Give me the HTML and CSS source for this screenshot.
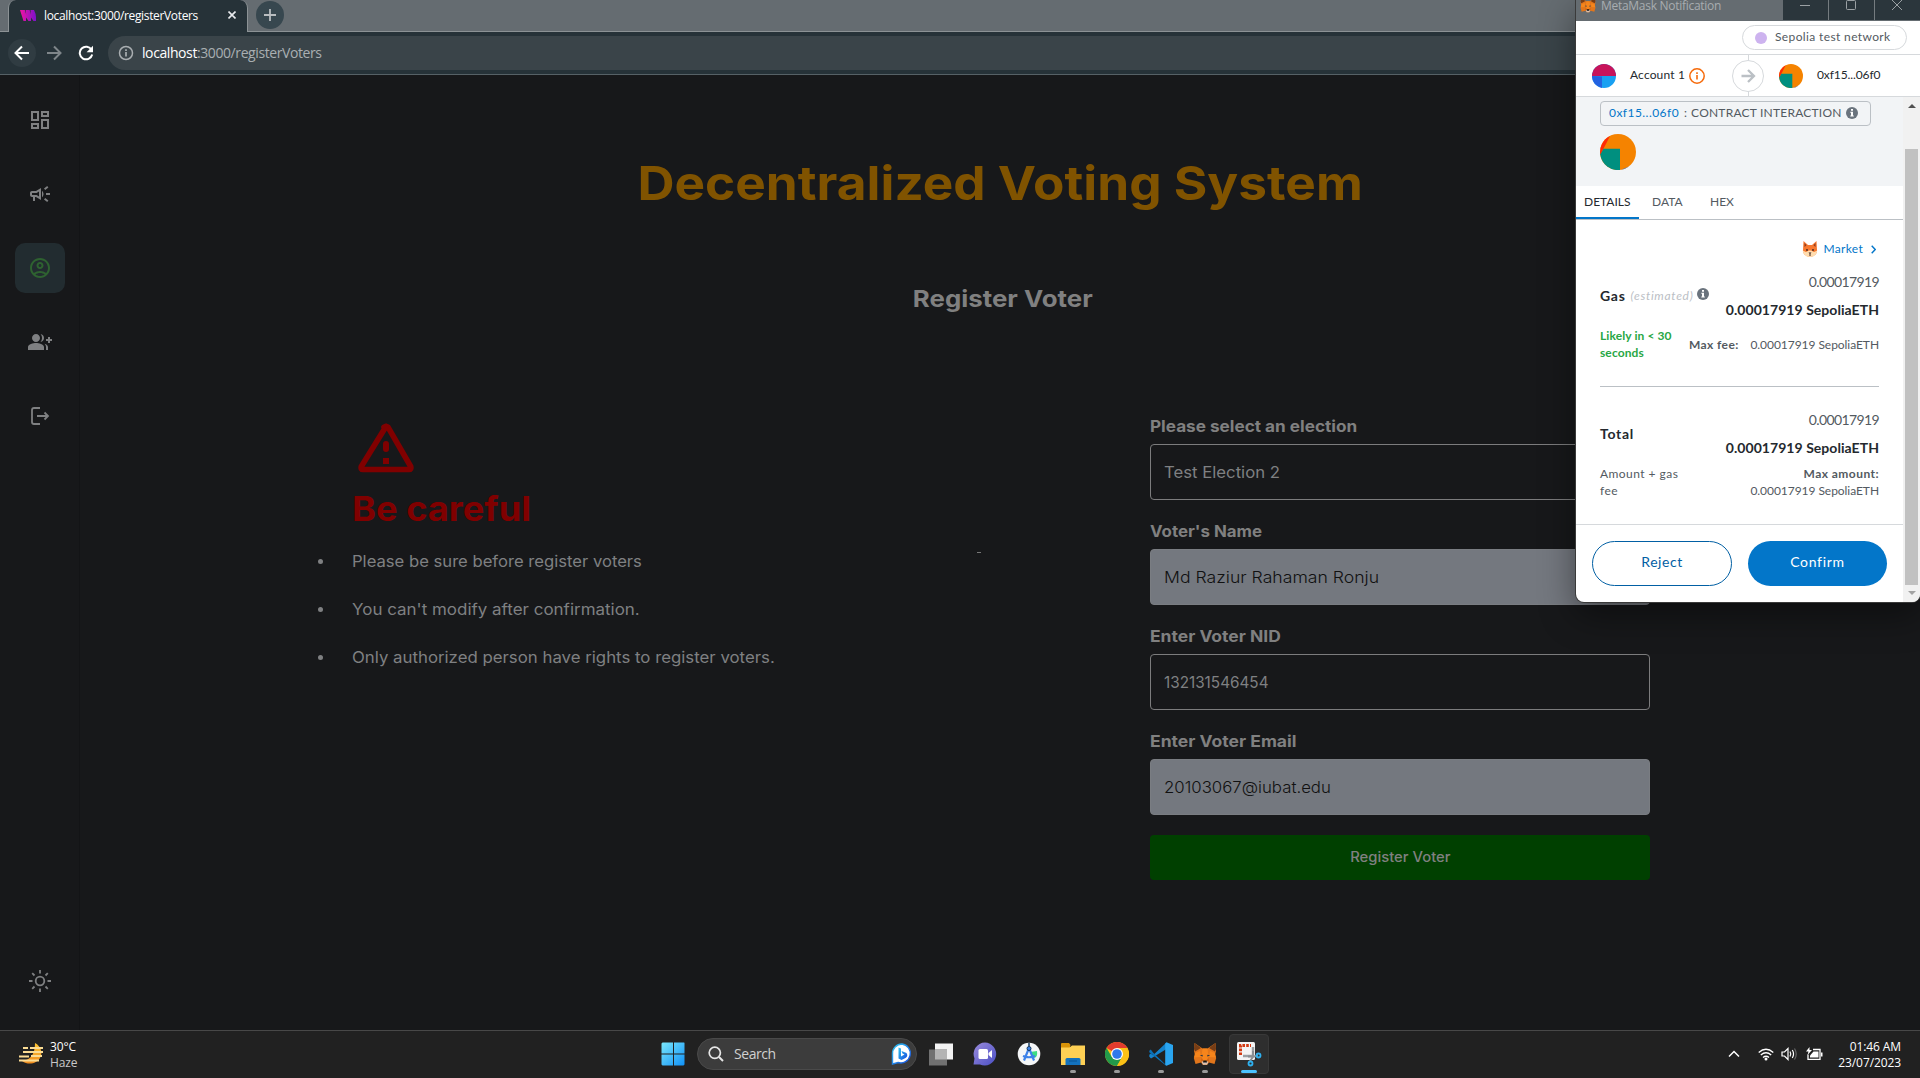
FILE: index.html
```html
<!DOCTYPE html>
<html lang="en">
<head>
<meta charset="utf-8">
<title>Decentralized Voting System</title>
<link rel="stylesheet" href="styles.css">
</head>
<body>
<svg class="defs" width="0" height="0" aria-hidden="true">
  <symbol id="fox" viewBox="0 0 24 24">
    <path fill="#e2761b" d="M1.500 1l8 5.500h5l8-5.500L23 9l-1 4 1.200 3-1.700 6-5.500-1.500-2 2.500h-4l-2-2.500L2.500 22 .8 16 2 13 1 9z"/>
    <path fill="#763d16" d="M1.500 1L8 6 5.500 7.500 2 9.500 1 7zM22.500 1L16 6l2.500 1.500L22 9.500 23 7z"/>
    <path fill="#f6851b" d="M9.500 6.500h5l1 8-2 4h-3l-2-4zM2 11l5-2 1 6-7 .5zM22 11l-5-2-1 6 7 .5z"/>
    <path fill="#cd6116" d="M8 20.500l.5-4.500 2 3zM16 20.500l-.5-4.500-2 3z"/>
    <path fill="#233447" d="M6.800 13.500l2.700-.8.4 1.800zM17.200 13.500l-2.700-.8-.4 1.800z"/>
    <path fill="#d7c1b3" d="M8.500 19.500h7L14 22.800h-4z"/>
    <path fill="#161616" d="M10.400 18.500h3.200l.4 2h-4z"/>
  </symbol>
  <symbol id="blockie" viewBox="0 0 36 36">
    <circle cx="18" cy="18" r="18" fill="#f58300"/>
    <path fill="#ff2a06" d="M10 2A18 18 0 0 0 .3 21z"/>
    <path fill="#008f7f" d="M3.500 14.800H20V36A18 18 0 0 1 .3 20.500z"/>
    <path fill="#3f77c9" d="M21 35.700l8-3.200a18 18 0 0 1-8 3.200z"/>
  </symbol>
  <symbol id="info" viewBox="0 0 12 12">
    <circle cx="6" cy="6" r="6" fill="#6a737d"/>
    <path fill="#fff" d="M5 2h2v1.700H5zM4.300 4.800H7v3.700h.8v1H4.300v-1H5V5.800h-.7z"/>
  </symbol>
</svg>

<header class="browser">
  <div class="tab-strip">
    <div class="tab">
      <svg class="favicon" width="16" height="11" viewBox="0 0 16 11"><defs><linearGradient id="fv"><stop offset="0" stop-color="#f213a4"/><stop offset="1" stop-color="#7c12c9"/></linearGradient></defs><path fill="url(#fv)" d="M0 0h4.800l1.400 4.500L5.600 0h4l1.400 4.500L10.500 0H14q2 4 2 7v4h-2.500L11 7.500V11H8.500L6 7.500V11H3.500z"/></svg>
      <span class="tab-title">localhost:3000/registerVoters</span>
      <svg class="tab-close" width="8" height="8" viewBox="0 0 8 8"><path d="M.5.5l7 7M7.500.5l-7 7" stroke="#e8eaed" stroke-width="1.600"/></svg>
    </div>
    <div class="new-tab"><svg width="12" height="12" viewBox="0 0 12 12"><path d="M6 0v12M0 6h12" stroke="#b9bdc0" stroke-width="1.800"/></svg></div>
  </div>
  <div class="toolbar">
    <span class="nav-btn nav-back"><svg width="16" height="16" viewBox="0 0 16 16"><path d="M15 8H2M8 1.500L1.500 8 8 14.500" fill="none" stroke="#fff" stroke-width="2"/></svg></span>
    <span class="nav-btn"><svg width="16" height="16" viewBox="0 0 16 16"><path d="M1 8h13M8 1.500L14.500 8 8 14.500" fill="none" stroke="#7f868a" stroke-width="2"/></svg></span>
    <span class="nav-btn"><svg width="16" height="16" viewBox="0 0 16 16"><path d="M13.600 5A6.300 6.300 0 1 0 14.200 9.500" fill="none" stroke="#fff" stroke-width="2"/><path d="M15 .8v6.400H8.600z" fill="#fff"/></svg></span>
    <div class="address">
      <svg width="16" height="16" viewBox="0 0 16 16"><circle cx="8" cy="8" r="6.500" fill="none" stroke="#a9aeb1" stroke-width="1.500"/><path d="M8 7v4.500M8 4.300v1.600" stroke="#a9aeb1" stroke-width="1.700"/></svg>
      <span class="url"><b>localhost</b>:3000/registerVoters</span>
    </div>
  </div>
</header>

<div class="page">
  <nav class="sidebar">
    <a class="side-item"><svg class="icon" viewBox="0 0 24 24"><path d="M19 5v2h-4V5h4M9 5v6H5V5h4m10 8v6h-4v-6h4M9 17v2H5v-2h4M21 3h-8v6h8V3zM11 3H3v10h8V3zm10 8h-8v10h8V11zm-10 4H3v6h8v-6z"/></svg></a>
    <a class="side-item"><svg class="icon" viewBox="0 0 24 24"><path d="M18 11v2h4v-2h-4zM16 17.610c.96.71 2.210 1.650 3.200 2.390.4-.53.8-1.070 1.200-1.600-.99-.74-2.240-1.680-3.200-2.400-.4.54-.8 1.080-1.200 1.610zM20.400 5.600c-.4-.53-.8-1.070-1.200-1.600-.99.74-2.240 1.680-3.200 2.400.4.53.8 1.070 1.200 1.600.96-.72 2.210-1.650 3.200-2.400zM4 9c-1.100 0-2 .9-2 2v2c0 1.100.9 2 2 2h1v4h2v-4h1l5 3V6L8 9H4zm5.030 1.710L11 9.530v4.940l-1.970-1.180-.48-.29H4v-2h4.550l.48-.29zM15.500 12c0-1.330-.58-2.530-1.500-3.350v6.690c.92-.81 1.500-2.010 1.500-3.340z"/></svg></a>
    <a class="side-item active"><svg class="icon" viewBox="0 0 24 24"><path d="M12 2C6.480 2 2 6.480 2 12s4.480 10 10 10 10-4.480 10-10S17.520 2 12 2zM7.350 18.500C8.660 17.560 10.260 17 12 17s3.340.56 4.650 1.500C15.340 19.440 13.740 20 12 20s-3.340-.56-4.650-1.500zm10.790-1.380C16.450 15.800 14.320 15 12 15s-4.450.8-6.140 2.120C4.700 15.730 4 13.950 4 12c0-4.420 3.580-8 8-8s8 3.580 8 8c0 1.950-.7 3.730-1.860 5.120zM12 6c-1.930 0-3.500 1.570-3.500 3.500S10.070 13 12 13s3.500-1.570 3.500-3.500S13.930 6 12 6zm0 5c-.83 0-1.500-.67-1.500-1.500S11.170 8 12 8s1.500.67 1.500 1.500S12.830 11 12 11z"/></svg></a>
    <a class="side-item"><svg class="icon" viewBox="0 0 24 24"><path d="M22 9V7h-2v2h-2v2h2v2h2v-2h2V9zM8 12c2.210 0 4-1.790 4-4s-1.790-4-4-4-4 1.790-4 4 1.790 4 4 4zm0 1c-2.670 0-8 1.340-8 4v3h16v-3c0-2.660-5.330-4-8-4zM12.510 4.050C13.430 5.110 14 6.490 14 8s-.57 2.890-1.490 3.950C14.470 11.700 16 10.040 16 8s-1.530-3.700-3.490-3.950zM16.530 13.830C17.420 14.660 18 15.700 18 17v3h2v-3c0-1.450-1.590-2.510-3.470-3.170z"/></svg></a>
    <a class="side-item"><svg class="icon stroked" viewBox="0 0 24 24"><path d="M12 4H6Q4 4 4 6v12q0 2 2 2h6M9 12h11M16.500 8.500L20 12l-3.500 3.500"/></svg></a>
    <a class="side-item theme"><svg class="icon stroked" viewBox="0 0 24 24"><circle cx="12" cy="12" r="4.300"/><path d="M12 1v3.500M12 19.500V23M1 12h3.500M19.500 12H23M4.200 4.200l2.300 2.300M17.500 17.500l2.300 2.300M4.200 19.800l2.300-2.300M17.500 6.500l2.300-2.300"/></svg></a>
  </nav>

  <main class="content">
    <h1 class="title"><span>Decentralized Voting System</span></h1>
    <h2 class="subtitle"><span>Register Voter</span></h2>
    <div class="columns">
      <section class="notice">
        <svg class="warn" width="56" height="50" viewBox="0 0 56 50"><path d="M28 3.500L3.300 43.500Q2.500 46.500 5 46.500H51Q53.500 46.500 52.700 43.500L30 4.200Q28 2.500 26 4.200z" fill="none" stroke="#800000" stroke-width="5.600" stroke-linejoin="round"/><path d="M28 21v5" stroke="#800000" stroke-width="6" stroke-linecap="round"/><path d="M25 35h6v6h-6z" fill="#800000"/></svg>
        <h3 class="notice-title"><span>Be careful</span></h3>
        <ul class="rules">
          <li class="rule-sure"><span>Please be sure before register voters</span></li>
          <li class="rule-modify"><span>You can't modify after confirmation.</span></li>
          <li class="rule-rights"><span>Only authorized person have rights to register voters.</span></li>
        </ul>
      </section>
      <form class="form">
        <label class="l-election">Please select an election</label>
        <div class="field f-election"><span>Test Election 2</span></div>
        <label class="l-name">Voter's Name</label>
        <div class="field filled f-name"><span>Md Raziur Rahaman Ronju</span></div>
        <label class="l-nid">Enter Voter NID</label>
        <div class="field f-nid"><span>132131546454</span></div>
        <label class="l-email">Enter Voter Email</label>
        <div class="field filled f-email"><span>20103067@iubat.edu</span></div>
        <div class="submit"><span>Register Voter</span></div>
      </form>
    </div>
    <i class="caret"></i>
  </main>
</div>

<footer class="taskbar">
  <div class="weather">
    <svg width="26" height="24" viewBox="0 0 26 24"><defs><linearGradient id="wx" x2="0" y2="1"><stop offset="0" stop-color="#ffc531"/><stop offset="1" stop-color="#f08c1e"/></linearGradient></defs><path d="M17 1c6 3 8 10 5 15s-11 8-18 3c8-1 13-6 13-18z" fill="url(#wx)"/><path d="M5 6h5M12 6h13M5 10h20M1 14.500h10M13 14h11M1 18.500h20" stroke="#fbdc94" stroke-width="2"/></svg>
    <div class="weather-text"><span>30°C</span><span class="dim">Haze</span></div>
  </div>
  <div class="dock">
    <div class="start"><svg width="24" height="24" viewBox="0 0 24 24"><defs><linearGradient id="wn" x2="1" y2="1"><stop offset="0" stop-color="#7ae7fb"/><stop offset="1" stop-color="#1091f7"/></linearGradient></defs><path fill="url(#wn)" d="M1.500.5H12v11H.5v-10zM13 .5h10q.5 0 .5.500v10.500H13zM.5 12.500H12v11H1.500l-1-1zM13 12.500h10.500v10l-1 1H13z"/></svg></div>
    <div class="search">
      <svg width="16" height="16" viewBox="0 0 16 16"><circle cx="6.800" cy="6.800" r="5.600" fill="none" stroke="#e6e6e6" stroke-width="1.700"/><path d="M11 11l4 4" stroke="#e6e6e6" stroke-width="1.900"/></svg>
      <span class="search-text">Search</span>
      <svg class="bing" width="22" height="22" viewBox="0 0 22 22"><defs><linearGradient id="bg" x2="1" y2="1"><stop offset="0" stop-color="#30c6f2"/><stop offset="1" stop-color="#1549dd"/></linearGradient></defs><path d="M11 1a9.500 9.500 0 1 1-4 18.500L1.500 21 1.500 11A9.500 9.500 0 0 1 11 1z" fill="#fff" stroke="url(#bg)" stroke-width="1.400"/><path d="M7.500 4.500l2.500 1v8l3.500-2-2-1-1-2.500 5 2q2 3-1 5l-4 2-3-1.500z" fill="url(#bg)"/></svg>
    </div>
    <div class="app"><svg width="24" height="24" viewBox="0 0 24 24"><path d="M6 1.500h18v16H6z" fill="#f3f3f3"/><path d="M0 7.500h18v16H0z" fill="#717171"/><path d="M6 7.500h12v10H6z" fill="#b4b4b4"/></svg></div>
    <div class="app"><svg width="24" height="24" viewBox="0 0 24 24"><defs><linearGradient id="ct" x2="1" y2="1"><stop offset="0" stop-color="#9a8bdc"/><stop offset="1" stop-color="#4a4fc4"/></linearGradient></defs><path d="M12 .5a11.500 11.500 0 1 1-5 22H.5l1-6A11.500 11.500 0 0 1 12 .5z" fill="url(#ct)"/><rect x="5.500" y="7" width="9.500" height="10" rx="1.500" fill="#fff"/><path d="M15.500 11l3.500-3v8l-3.500-3z" fill="#fff"/></svg></div>
    <div class="app"><svg width="24" height="24" viewBox="0 0 24 24"><circle cx="12" cy="12" r="11.300" fill="#f5f7f8"/><path d="M13 10l7-1q1 6-3 7z" fill="#3ddc84"/><path d="M12 6L7 18.500M12 6l5 12.500M6 14q6 2.500 12 0" fill="none" stroke="#3d83ea" stroke-width="2.200"/><circle cx="12" cy="6.500" r="2" fill="#3d83ea" stroke="#173a5e"/><path d="M12 1v3.500" stroke="#173a5e" stroke-width="1.500"/></svg></div>
    <div class="app running"><svg width="24" height="24" viewBox="0 0 24 24"><path d="M0 2q0-1 1-1h7l2 2.500h-1v4H0z" fill="#d89309"/><path d="M0 5.500h8.500l2.500-2H24V23H0z" fill="#fed054"/><path d="M4.500 23v-5.500q0-1.500 1.500-1.500h12q1.500 0 1.500 1.500V23z" fill="#1372bd"/><path d="M8 19h8" stroke="#0c5a9c" stroke-width="1.300"/></svg></div>
    <div class="app running"><svg width="24" height="24" viewBox="0 0 24 24"><circle cx="12" cy="12" r="12" fill="#fbc116"/><path d="M12 12L1.600 6A12 12 0 0 1 22.400 6z" fill="#e33b2e"/><path d="M12 12l-5.200 3L1.600 6A12 12 0 0 0 12 24l5.200-9z" fill="#229a4a"/><path d="M12 6h10.400A12 12 0 0 1 12 24l5.200-9z" fill="#fbc116"/><circle cx="12" cy="12" r="6" fill="#fff"/><circle cx="12" cy="12" r="4.800" fill="#3079ea"/></svg></div>
    <div class="app running"><svg width="24" height="24" viewBox="0 0 24 24"><path d="M17.500.5L4 13.200 1.800 11.500.3 12.800v2L2 16.500 17.500 7z" fill="#1583cc"/><path d="M17.500 23.500L4 10.500l-2.200-3L.3 8.800v1.500L17.500 24z" fill="#0a71b9"/><path d="M17.500.3L24 3v18l-6.500 2.800-1.300-1V1.500z" fill="#2aa5f0"/></svg></div>
    <div class="app running"><svg width="24" height="24"><use href="#fox"/></svg></div>
    <div class="app current"><svg width="26" height="26" viewBox="0 0 26 26"><rect x="1" y="1" width="18" height="18" rx="1.500" fill="#f4f4f4"/><path d="M4.500 14V4.500H15" fill="none" stroke="#d33a12" stroke-width="3" stroke-dasharray="2.600 1.200"/><path d="M7 15h10V6" fill="none" stroke="#9b9fa3" stroke-width="2.400"/><path d="M17 10v6l-3 4M12 15.500h6l4-1" fill="none" stroke="#8a8e92" stroke-width="2"/><circle cx="14.500" cy="22.500" r="2" fill="none" stroke="#2eb0ef" stroke-width="1.800"/><circle cx="22.500" cy="14.500" r="2" fill="none" stroke="#2eb0ef" stroke-width="1.800"/></svg></div>
  </div>
  <div class="tray">
    <svg width="12" height="8" viewBox="0 0 12 8"><path d="M1 6.500l5-5 5 5" fill="none" stroke="#fff" stroke-width="1.500"/></svg>
    <svg class="wifi" width="16" height="13" viewBox="0 0 16 13"><path d="M.7 4.500Q8-2 15.300 4.500M2.800 7Q8 2.500 13.200 7M5 9.500Q8 7 11 9.500" fill="none" stroke="#fff" stroke-width="1.300"/><circle cx="8" cy="11" r="1.500" fill="#fff"/></svg>
    <svg class="sound" width="17" height="14" viewBox="0 0 17 14"><path d="M1 5h2.500L7 1.500v11L3.500 9H1z" fill="none" stroke="#fff" stroke-width="1.200"/><path d="M9 4.500q1.500 2.500 0 5M11.300 3q2.500 4 0 8" fill="none" stroke="#fff" stroke-width="1.200"/><path d="M13.500 1.500q3.500 5.500 0 11" fill="none" stroke="#666" stroke-width="1.200"/></svg>
    <svg class="battery" width="17" height="14" viewBox="0 0 17 14"><path d="M7 2.500h7v9.800H2V7.500" fill="none" stroke="#fff" stroke-width="1.300"/><path d="M7.500 4.500H12.500v6H4V8.500z" fill="#fff"/><path d="M15 5.500h1.500v4H15zM3.500 0L0 4.500h2.500L1.500 8 6 3H3.500z" fill="#fff"/></svg>
    <div class="clock"><span>01:46 AM</span><span>23/07/2023</span></div>
  </div>
</footer>

<aside class="wallet">
  <div class="wallet-bar">
    <svg width="16" height="16"><use href="#fox"/></svg>
    <span class="wallet-name">MetaMask Notification</span>
    <div class="win-btn"><svg width="10" height="10" viewBox="0 0 10 10"><path d="M0 5.500h10"/></svg></div>
    <div class="win-btn"><svg width="10" height="10" viewBox="0 0 10 10"><rect x=".5" y=".5" width="9" height="9" rx="1"/></svg></div>
    <div class="win-btn"><svg width="10" height="10" viewBox="0 0 10 10"><path d="M0 0l10 10M10 0L0 10"/></svg></div>
  </div>
  <div class="network-row"><div class="network"><i class="dot"></i><span>Sepolia test network</span></div></div>
  <div class="parties">
    <div class="party from">
      <svg width="24" height="24" viewBox="0 0 24 24"><circle cx="12" cy="12" r="12" fill="#18a0f2"/><path d="M0 12a12 12 0 0 1 24 0z" fill="#c8145b"/><path d="M0 12l10 .5V24A12 12 0 0 1 0 12z" fill="#2362e1"/></svg>
      <span>Account 1</span>
      <svg class="alert" width="16" height="16" viewBox="0 0 16 16"><circle cx="8" cy="8" r="7.200" fill="none" stroke="#f66a0a" stroke-width="1.500"/><path d="M8 7v4.500M8 4.300v1.600" stroke="#f66a0a" stroke-width="1.600"/></svg>
    </div>
    <div class="arrow"><svg width="32" height="32" viewBox="0 0 32 32"><circle cx="16" cy="16" r="15.500" fill="#fff" stroke="#d6d9dc"/><path d="M9.500 16h12M16 10l6 6-6 6" fill="none" stroke="#bbc0c5" stroke-width="2.300"/></svg></div>
    <div class="party to"><svg width="24" height="24"><use href="#blockie"/></svg><span>0xf15...06f0</span></div>
  </div>
  <div class="wallet-body">
    <div class="scroll-area">
      <div class="summary">
        <div class="tag"><a>0xf15...06f0</a><span class="colon">:</span><span class="tag-kind">CONTRACT INTERACTION</span><svg width="12" height="12"><use href="#info"/></svg></div>
        <svg class="big-avatar" width="36" height="36"><use href="#blockie"/></svg>
      </div>
      <div class="tabs"><span class="tab-on">DETAILS</span><span class="tab-off">DATA</span><span class="tab-off">HEX</span></div>
      <div class="details">
        <div class="market"><svg width="16" height="16" viewBox="0 0 16 16"><path d="M1.500 0L6 4h4l4.500-4L15 9q0 6-7 7-7-1-7-7z" fill="#f7782f"/><path d="M.5 9.500L4 11l3-1.500h2L12 11l3.500-1.500Q14 16 8 16 2 16 .5 9.500z" fill="#ffdcae"/><path d="M2.500 2l2 2.200L2.500 6zM13.500 2l-2 2.200 2 1.800z" fill="#8d3a20"/><circle cx="5" cy="9" r=".9" fill="#3b2322"/><circle cx="11" cy="9" r=".9" fill="#3b2322"/><path d="M6.500 11.500h3L8 13.200zM7.500 13h1v2h-1z" fill="#3b2322"/></svg><span>Market</span><svg class="chev" width="5" height="9" viewBox="0 0 5 9"><path d="M.7.700l3.500 3.800L.7 8.300" fill="none" stroke="#0376c9" stroke-width="1.400"/></svg></div>
        <div class="row">
          <div class="row-label"><b>Gas</b><em>(estimated)</em><svg width="12" height="12"><use href="#info"/></svg></div>
          <div class="amounts"><span class="fiat">0.00017919</span><b>0.00017919 SepoliaETH</b></div>
        </div>
        <div class="fee-row"><div class="likely"><span>Likely in &lt; 30</span><span>seconds</span></div><b>Max fee:</b><span class="max-value">0.00017919 SepoliaETH</span></div>
        <div class="row total">
          <div class="row-label"><b>Total</b></div>
          <div class="amounts"><span class="fiat">0.00017919</span><b>0.00017919 SepoliaETH</b></div>
        </div>
        <div class="sum-row"><div class="stack"><span>Amount + gas</span><span>fee</span></div><div class="stack right"><b>Max amount:</b><span class="max-value">0.00017919 SepoliaETH</span></div></div>
      </div>
      <div class="actions"><div class="btn reject">Reject</div><div class="btn confirm">Confirm</div></div>
    </div>
    <div class="scrollbar"><i class="up"></i><i class="thumb"></i><i class="down"></i></div>
  </div>
</aside>
</body>
</html>
```
FILE: styles.css
```css
* { box-sizing: border-box; }
body { margin: 0; width: 1920px; height: 1078px; overflow: hidden; position: relative; display: flex; flex-direction: column; background: #17181a; font-family: Inter, sans-serif; }
.defs { position: absolute; }
svg { display: block; flex: none; }
h1, h2, h3, ul { margin: 0; padding: 0; }
span, b, em, a { white-space: nowrap; }

/* browser chrome */
.browser { height: 75px; flex: none; background: #263238; border-bottom: 1px solid #566166; font-family: "Open Sans", sans-serif; }
.tab-strip { height: 32px; background: #656c71; display: flex; align-items: flex-start; padding-left: 8px; border-bottom: 1px solid #8c9295; }
.tab { width: 240px; height: 32px; background: #263238; border-radius: 8px 8px 0 0; border: 1px solid #8c9295; border-width: 0 1px; display: flex; align-items: center; padding: 0 11px 2px 11px; }
.tab-title { margin-left: 8px; font-size: 12px; letter-spacing: -0.35px; color: #fff; }
.tab-close { margin-left: auto; }
.new-tab { width: 28px; height: 28px; margin: 1px 0 0 8px; border-radius: 50%; background: #37474f; display: flex; align-items: center; justify-content: center; }
.toolbar { height: 42px; display: flex; align-items: center; padding-left: 8px; }
.nav-btn { width: 28px; height: 28px; margin-right: 4px; border-radius: 50%; display: flex; align-items: center; justify-content: center; }
.nav-back { background: #303c42; }
.address { flex: 1; height: 34px; margin-left: 4px; background: #3a4449; border-radius: 17px 0 0 17px; display: flex; align-items: center; padding-left: 10px; }
.url { margin-left: 8px; padding-bottom: 1px; font-size: 14px; letter-spacing: -0.41px; color: #a9afb2; }
.url b { font-weight: 400; color: #fff; }

/* app */
.page { height: 955px; flex: none; display: flex; background: #17181a; }
.sidebar { width: 80px; flex: none; border-right: 1px solid #131416; display: flex; flex-direction: column; align-items: center; gap: 24px; padding: 20px 0 24px; }
.side-item { width: 50px; height: 50px; border-radius: 10px; display: flex; align-items: center; justify-content: center; }
.side-item.active { background: #222c30; }
.side-item.theme { margin-top: auto; }
.icon { width: 24px; height: 24px; fill: #7f8082; }
.active .icon { fill: #2e6230; }
.icon.stroked { fill: none; stroke: #7f8082; stroke-width: 1.8; }
.content { flex: 1; position: relative; }

/* headings and form text are set slightly wide */
.title span, .subtitle span, .notice-title span, .submit span { display: inline-block; transform: scaleX(1.092); }
.title { padding-top: 78px; height: 202px; text-align: center; font-size: 47px; line-height: 60px; color: #805300; }
.subtitle { height: 144px; padding-left: 5px; text-align: center; font-size: 23.5px; line-height: 43px; color: #808080; }
.subtitle span { transform: scaleX(1.1); }
.columns { display: flex; justify-content: space-between; padding: 0 270px 0 272px; }
.notice { padding-top: 2px; }
.warn { margin-left: 6px; }
.notice-title { font-size: 34px; line-height: 54px; margin: 9px 0 1px; color: #800000; }
.notice-title span { transform: scaleX(1.066); transform-origin: left; }
.rules { list-style: none; font-size: 16px; color: #7f8082; }
.rules li { height: 48px; display: flex; align-items: center; margin-left: -34px; }
.rules li::before { content: ""; width: 5px; height: 5px; border-radius: 50%; background: #7f8082; margin-right: 28.5px; }
.rules span, .form label, .field span { transform-origin: left; }
.rule-sure span { transform: scaleX(1.039); }
.rule-modify span { transform: scaleX(1.06); }
.rule-rights span { transform: scaleX(1.05); }
.form { width: 500px; }
.form label { display: block; height: 23px; padding-top: 5px; font-size: 16px; font-weight: 700; line-height: 0; color: #808080; }
.l-election { transform: scaleX(1.072); }
.l-name { transform: scaleX(1.055); }
.l-nid { transform: scaleX(1.092); }
.l-email { transform: scaleX(1.095); }
.field { height: 56px; border: 1px solid #7c7c7d; border-radius: 4px; margin-bottom: 26px; padding: 0 13px; display: flex; align-items: center; font-size: 16px; color: #7f8082; }
.field.filled { background: #74787f; color: #111; font-weight: 300; border-color: #7a7d82; }
.f-election span { transform: scaleX(1.045); }
.f-name span { transform: scaleX(1.102); }
.f-nid span { transform: scaleX(0.955); }
.f-email span { transform: scaleX(1.05); }
.submit { height: 45px; margin-top: -6px; border-radius: 4px; background: #004000; display: flex; align-items: center; justify-content: center; padding-bottom: 2px; font-size: 14px; font-weight: 500; color: #808080; }
.submit span { transform: scaleX(1.06); }
.caret { position: absolute; left: 897px; top: 477px; width: 4px; height: 1px; background: #777; }

/* taskbar */
.taskbar { height: 48px; flex: none; display: grid; grid-template-columns: 650px auto 1fr; background: #212121; border-top: 1px solid #484848; font-family: "Open Sans", sans-serif; color: #fff; font-size: 12px; }
.weather { display: flex; align-items: center; padding: 0 0 1px 18px; }
.weather-text { margin-left: 6px; padding-top: 1px; line-height: 16px; display: flex; flex-direction: column; letter-spacing: -0.1px; }
.dim { color: #c8c8c8; }
.dock { display: flex; align-items: center; padding-bottom: 1px; }
.start { width: 47px; padding-left: 11px; }
.search { width: 220px; height: 32px; margin-right: 2px; border-radius: 16px; background: #3c3c3c; border: 1px solid #4a4a4a; display: flex; align-items: center; padding: 0 3px 0 10px; }
.search-text { margin-left: 10px; padding-bottom: 1px; font-size: 14px; letter-spacing: -0.45px; color: #d0d0d0; }
.bing { margin-left: auto; }
.app { width: 40px; height: 40px; margin: 0 2px; border-radius: 4px; display: flex; align-items: center; justify-content: center; position: relative; }
.app.current { background: #2e2e2e; border: 1px solid #383838; }
.running::after, .current::after { content: ""; position: absolute; bottom: 1px; left: 17px; width: 6px; height: 3px; border-radius: 2px; background: #9a9a9a; }
.current::after { left: 11px; width: 16px; bottom: 0; background: #4cc2ff; }
.tray { display: flex; align-items: center; justify-content: flex-end; padding: 0 19px 1px 0; }
.wifi { margin-left: 18px; }
.sound { margin-left: 7px; }
.battery { margin-left: 8px; }
.clock { width: 78px; padding-top: 1px; line-height: 16px; display: flex; flex-direction: column; align-items: flex-end; letter-spacing: -0.1px; }

/* wallet window */
.wallet { position: absolute; left: 1576px; top: 0; width: 344px; height: 602px; background: #fff; border-radius: 0 0 8px 8px; overflow: hidden; box-shadow: 0 0 0 1px #3a3a3a, 0 12px 36px rgba(0, 0, 0, 0.45); font-family: Lato, sans-serif; color: #24292e; font-size: 12px; display: flex; flex-direction: column; }
.wallet-bar { height: 21px; flex: none; background: #656c71; display: flex; font-family: "Open Sans", sans-serif; padding-left: 4px; }
.wallet-bar > svg { margin-top: -3px; }
.wallet-name { width: 187px; flex: none; padding-left: 5px; line-height: 12px; letter-spacing: -0.28px; color: #a8adb0; }
.win-btn { width: 46px; flex: none; height: 20px; background: #2b363c; border-right: 1px solid #757c80; display: flex; justify-content: center; padding-right: 2px; }
.win-btn:last-child { width: 45px; border: 0; }
.win-btn svg { fill: none; stroke: #9ba1a4; }
.network-row { height: 34px; flex: none; border-bottom: 1px solid #d6d9dc; display: flex; justify-content: flex-end; padding: 4px 13px 0 0; }
.network { width: 165px; height: 25px; border: 1px solid #d6d9dc; border-radius: 13px; display: flex; align-items: center; padding: 0 0 2px 12px; letter-spacing: 0.37px; color: #535a61; }
.dot { width: 12px; height: 12px; border-radius: 50%; background: #cdb3ef; margin: 3px 8px 0 0; }
.parties { height: 42px; flex: none; border-bottom: 1px solid #d6d9dc; display: flex; background: linear-gradient(#d6d9dc, #d6d9dc) 172px 0 / 1px 100% no-repeat; }
.party { display: flex; align-items: center; }
.party span { padding-bottom: 3px; }
.from { width: 156px; padding-left: 16px; }
.from span { margin-left: 14px; letter-spacing: 0.15px; }
.alert { margin-left: 4px; }
.arrow { width: 32px; display: flex; align-items: center; }
.to { padding-left: 15px; }
.to span { margin-left: 14px; letter-spacing: -0.1px; }
.wallet-body { flex: 1; display: flex; min-height: 0; }
.scroll-area { width: 327px; display: flex; flex-direction: column; }
.summary { height: 89px; flex: none; background: #f2f4f6; padding: 4px 0 0 24px; }
.tag { width: 271px; height: 25px; border: 1px solid #bbc0c5; border-radius: 4px; display: flex; align-items: center; padding: 0 0 2px 8px; color: #535a61; }
.tag a { color: #0376c9; letter-spacing: 0.45px; }
.colon { margin: 0 4px 0 5px; }
.tag-kind { letter-spacing: 0.22px; }
.tag svg { margin: 1px 0 0 4px; }
.big-avatar { margin-top: 8px; }
.tabs { height: 34px; flex: none; display: flex; border-bottom: 1px solid #bbc0c5; color: #535a61; line-height: 31px; }
.tab-on { width: 63px; height: 33px; padding-left: 8px; border-bottom: 2px solid #0376c9; color: #24292e; margin-right: 13px; }
.tab-off { width: 58px; }
.details { height: 305px; flex: none; padding: 20px 24px 0; border-bottom: 1px solid #d6d9dc; color: #535a61; }
.market { height: 18px; display: flex; justify-content: flex-end; align-items: center; color: #0376c9; padding-right: 3px; }
.market span { margin: 0 8px 0 6px; padding-bottom: 2px; letter-spacing: 0.3px; }
.row { display: flex; justify-content: space-between; margin-top: 10px; }
.row.total { margin-top: 19px; }
.row-label { height: 54px; display: flex; align-items: center; font-size: 14px; color: #24292e; letter-spacing: 0.7px; }
.row-label em { margin-left: 5px; font-size: 12px; color: #bbc0c5; }
.row-label svg { margin: -2px 0 0 4px; }
.amounts { height: 56px; display: flex; flex-direction: column; align-items: flex-end; font-size: 14px; line-height: 28px; color: #24292e; letter-spacing: 0.05px; }
.fiat { color: #535a61; letter-spacing: -0.62px; }
.fee-row { height: 63px; padding-top: 3px; border-bottom: 1px solid #bbc0c5; display: flex; line-height: 35px; }
.likely { width: 89px; display: flex; flex-direction: column; line-height: 17px; font-weight: 700; letter-spacing: 0.1px; color: #28a745; }
.fee-row b { letter-spacing: 0.4px; }
.max-value { margin-left: auto; letter-spacing: -0.05px; }
.sum-row { display: flex; justify-content: space-between; padding-top: 3px; line-height: 17px; letter-spacing: 0.45px; }
.stack { display: flex; flex-direction: column; }
.stack.right { align-items: flex-end; }
.actions { display: flex; gap: 16px; padding: 16px 16px 0; font-size: 14px; }
.btn { height: 45px; border-radius: 23px; display: flex; align-items: center; justify-content: center; padding-bottom: 4px; }
.reject { width: 140px; border: 1px solid #0260a4; color: #0260a4; letter-spacing: 0.55px; }
.confirm { width: 139px; background: #0376c9; color: #fff; letter-spacing: 0.7px; }
.scrollbar { width: 17px; background: #f1f1f1; display: flex; flex-direction: column; align-items: center; padding: 7px 0; }
.up, .down { width: 0; height: 0; border: 4px solid transparent; flex: none; }
.up { border-bottom-color: #505050; border-top: 0; }
.down { border-top-color: #a3a3a3; border-bottom: 0; }
.thumb { width: 13px; height: 436px; background: #c1c1c1; margin: 41px 0 6px; flex: none; }
```
